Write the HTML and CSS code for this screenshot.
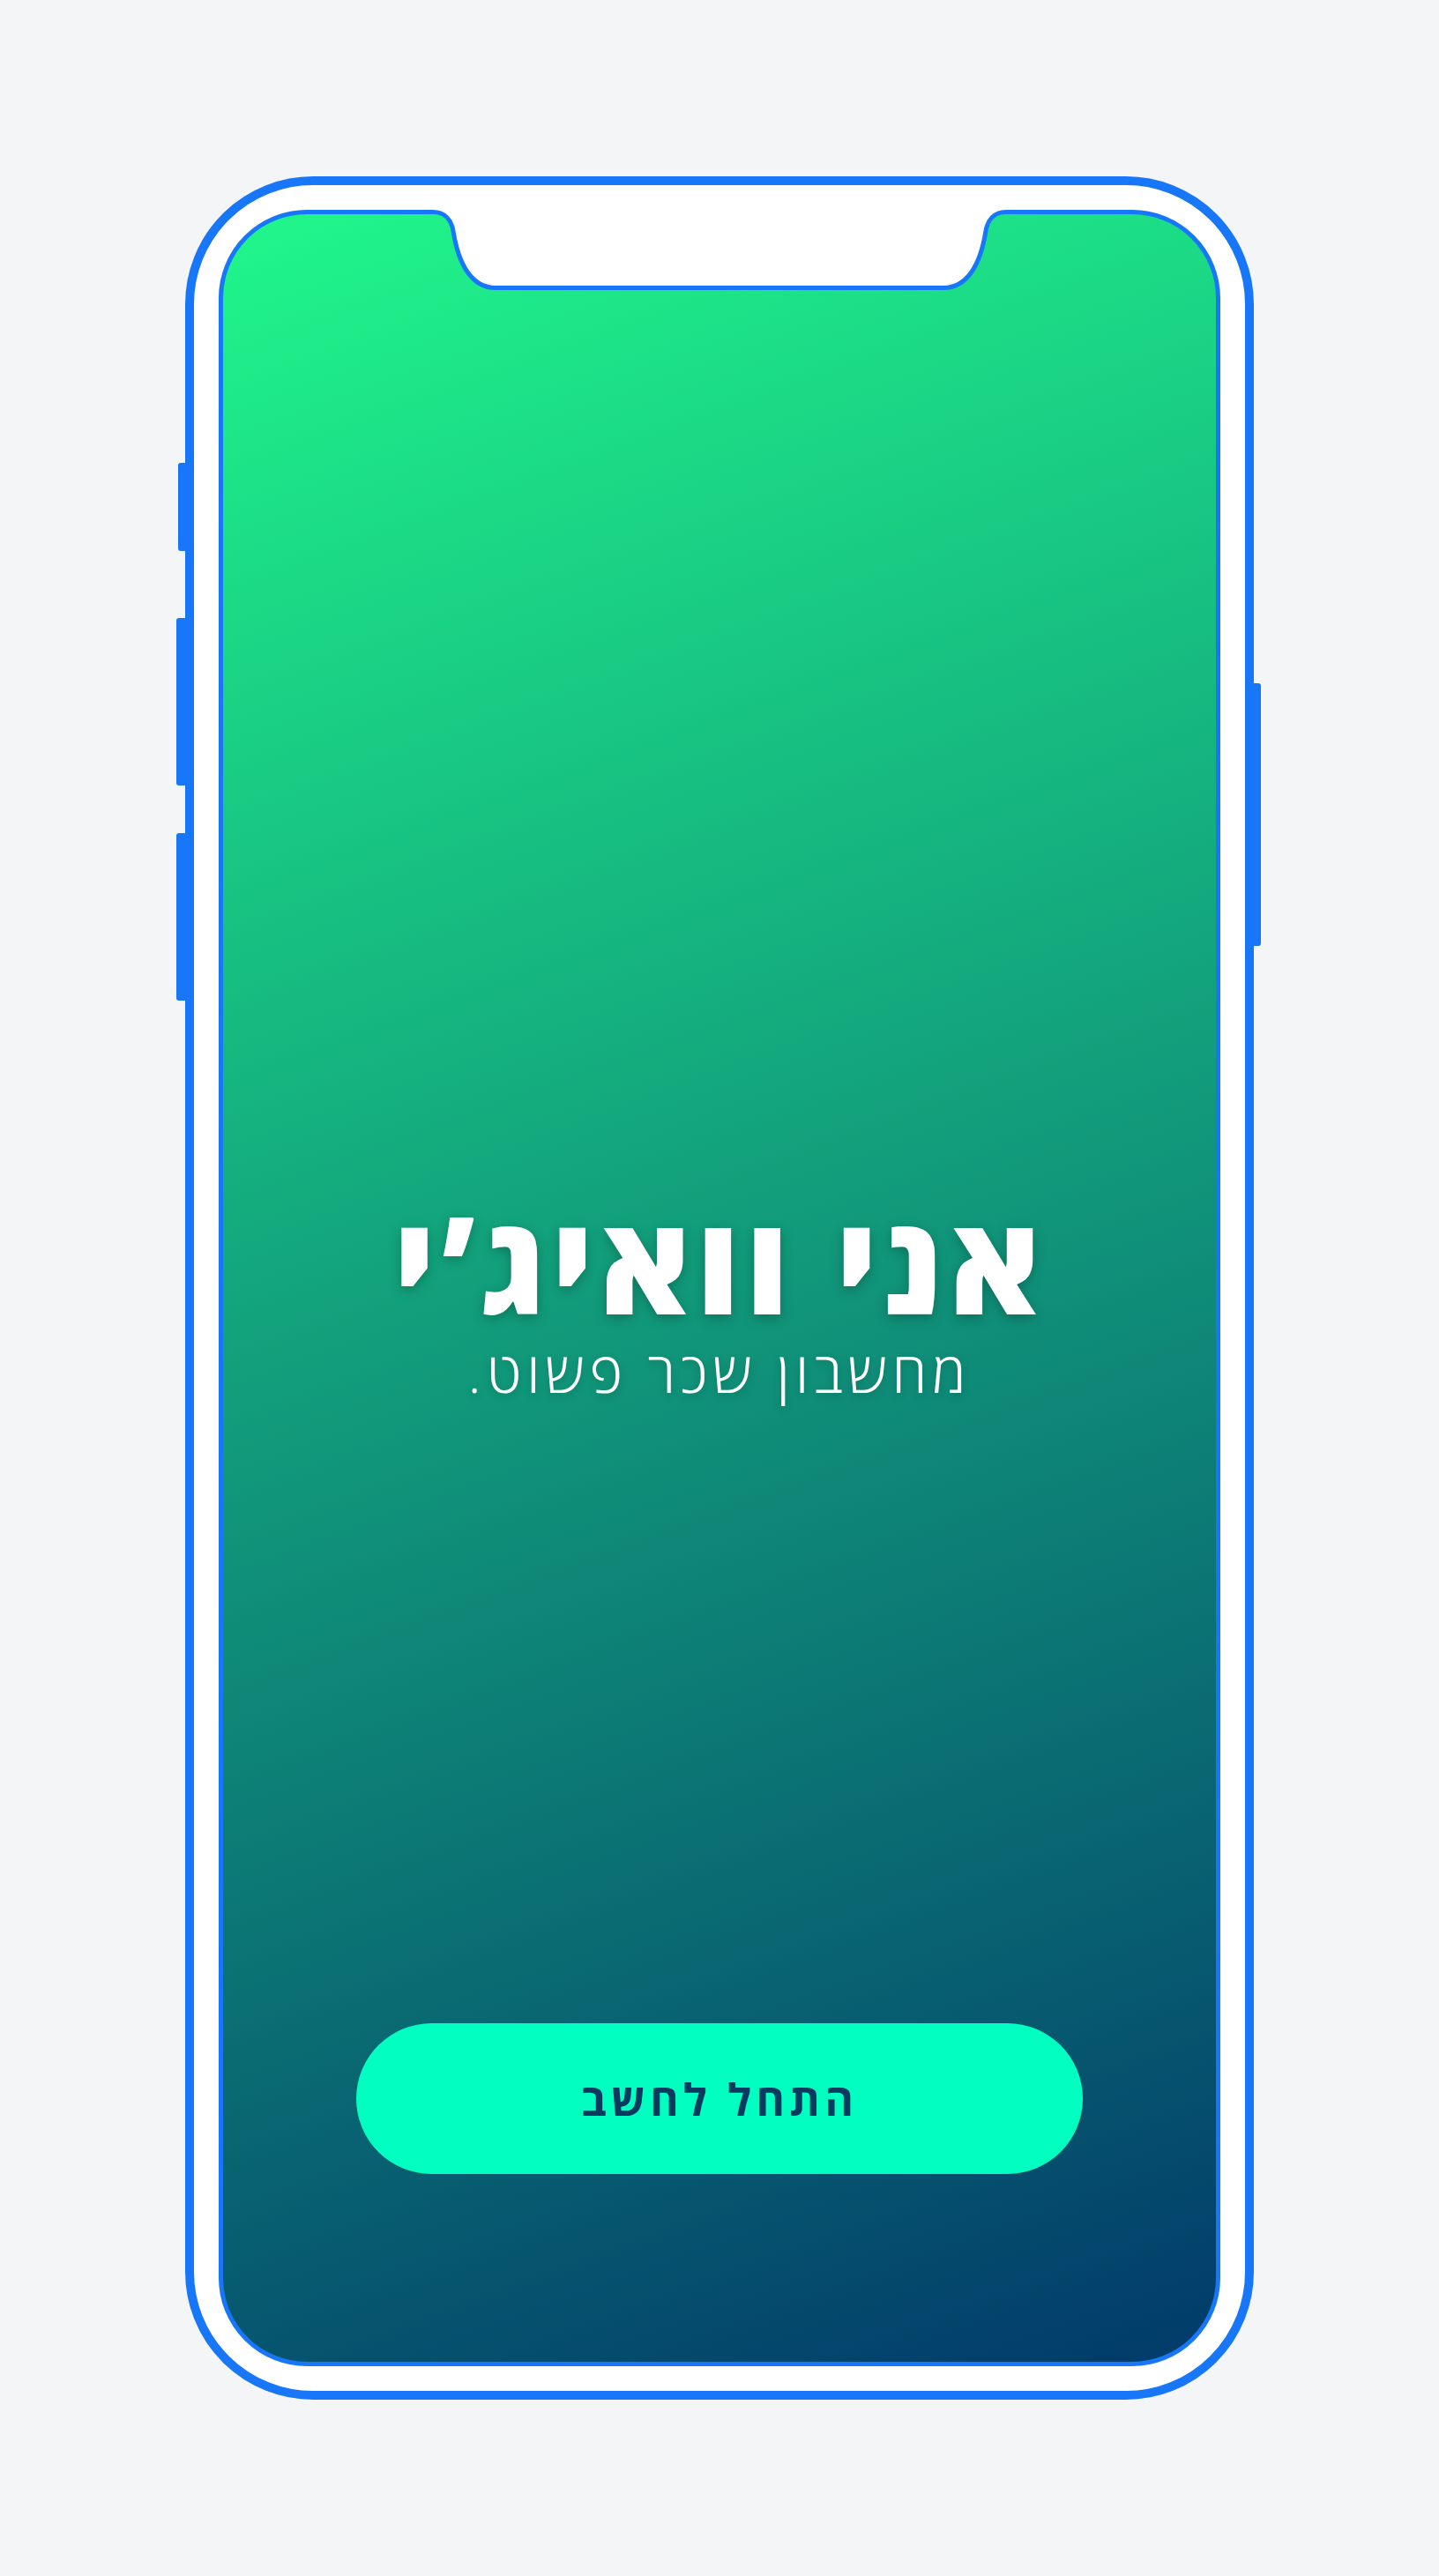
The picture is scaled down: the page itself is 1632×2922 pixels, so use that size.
FILE: index.html
```html
<!DOCTYPE html>
<html lang="he" dir="rtl">
<head>
<meta charset="utf-8">
<title>אני וואיג'י</title>
<link rel="stylesheet" href="styles.css">
</head>
<body>
<div class="stage">
  <div class="phone">
    <span class="side-btn side-btn--mute"></span>
    <span class="side-btn side-btn--vol-up"></span>
    <span class="side-btn side-btn--vol-down"></span>
    <span class="side-btn side-btn--power"></span>
    <div class="screen">
      <svg class="notch" viewBox="248 238 1136 100" width="1136" height="100" aria-hidden="true">
        <path class="notch-fill" d="M470 234 L470 240.5 L491 240.5 C505 240.5 512 250 514 262 C520 300 535 326.5 562 326.5 L1070 326.5 C1097 326.5 1112 300 1118 262 C1120 250 1127 240.5 1141 240.5 L1162 240.5 L1162 234 Z"/>
        <path class="notch-line" d="M470 240.5 L491 240.5 C505 240.5 512 250 514 262 C520 300 535 326.5 562 326.5 L1070 326.5 C1097 326.5 1112 300 1118 262 C1120 250 1127 240.5 1141 240.5 L1162 240.5"/>
      </svg>
      <div class="hero">
        <h1 class="hero-title">אני וואיג’י</h1>
        <p class="hero-sub">מחשבון שכר פשוט.</p>
      </div>
      <button class="cta" type="button">התחל לחשב</button>
    </div>
  </div>
</div>
</body>
</html>
```

FILE: styles.css
```css
html, body {
  margin: 0;
  padding: 0;
}

body {
  background: #f4f5f7;
  font-family: "Open Sans", "DejaVu Sans", sans-serif;
  min-height: 2922px;
}

.stage {
  padding-top: 200px;
}

.phone {
  position: relative;
  width: 1212px;
  height: 2522px;
  margin: 0 auto;
  box-sizing: border-box;
  border: 10px solid #1877f8;
  border-radius: 145px;
  background: #ffffff;
  padding: 28px;
}

.side-btn {
  position: absolute;
  background: #1877f8;
  border-radius: 3px;
}

.side-btn--mute {
  left: -18px;
  width: 10px;
  top: 315px;
  height: 100px;
}

.side-btn--vol-up {
  left: -20px;
  width: 12px;
  top: 491px;
  height: 190px;
}

.side-btn--vol-down {
  left: -20px;
  width: 12px;
  top: 735px;
  height: 190px;
}

.side-btn--power {
  right: -18px;
  width: 10px;
  top: 565px;
  height: 298px;
}

.screen {
  position: relative;
  height: 100%;
  box-sizing: border-box;
  border: 5px solid #1877f8;
  border-radius: 100px;
  background: linear-gradient(160deg, #20f78b 0%, #023a6a 100%);
  display: flex;
  flex-direction: column;
  align-items: center;
}

.notch {
  position: absolute;
  left: -5px;
  top: -5px;
  overflow: visible;
}

.notch-fill {
  fill: #ffffff;
}

.notch-line {
  fill: none;
  stroke: #1877f8;
  stroke-width: 5;
}

.hero {
  margin-top: 1110px;
  display: flex;
  flex-direction: column;
  align-items: center;
  color: #ffffff;
}

.hero-title {
  margin: 0;
  font-size: 155px;
  line-height: 1;
  font-weight: 800;
  letter-spacing: 6px;
  text-shadow: 0 4px 14px rgba(0, 0, 0, 0.25);
}

.hero-sub {
  margin: 16px 0 0;
  font-size: 64px;
  line-height: 1;
  font-weight: 300;
  letter-spacing: 6px;
  text-shadow: 0 3px 10px rgba(0, 0, 0, 0.2);
}

.cta {
  margin-top: auto;
  margin-bottom: 213px;
  width: 824px;
  height: 171px;
  border: 0;
  border-radius: 86px;
  background: #00ffc0;
  color: #0a3a60;
  font-family: "Open Sans", "DejaVu Sans", sans-serif;
  font-size: 50px;
  font-weight: 700;
  letter-spacing: 5px;
  padding: 0;
  cursor: pointer;
}
```
